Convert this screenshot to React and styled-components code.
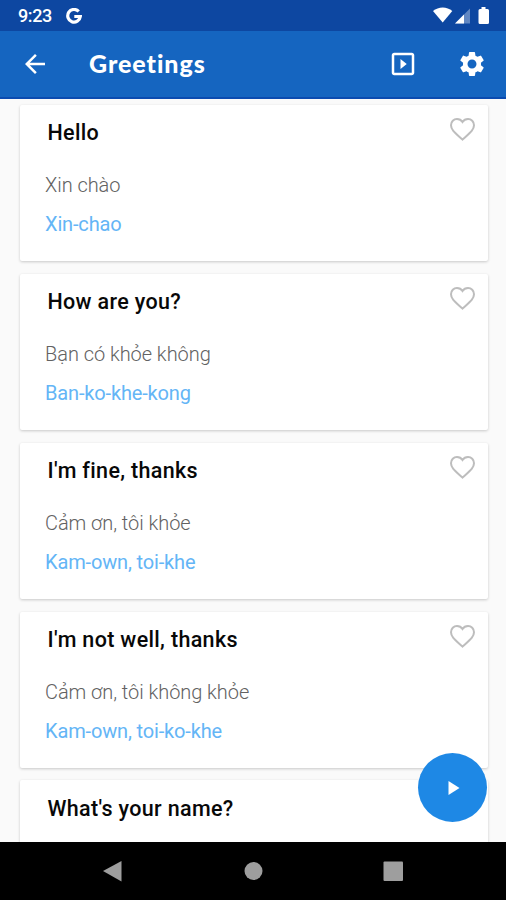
import React from "react"
import styled, { createGlobalStyle } from "styled-components"
import { MdArrowBack, MdOutlineSlideshow, MdSettings } from "react-icons/md"

const GlobalStyle = createGlobalStyle`
    * {
        box-sizing: border-box;
    }

    body {
        margin: 0;
        background: #fafafa;
        font-family: Roboto, "Noto Sans", sans-serif;
    }

    svg {
        display: block;
    }
`

const Screen = styled.div`
    position: relative;
    display: flex;
    flex-direction: column;
    width: 506px;
    height: 900px;
    overflow: hidden;
    background: #fafafa;
`

const StatusBar = styled.div`
    display: flex;
    flex: none;
    align-items: center;
    height: 31px;
    padding: 0 16px 0 18px;
    background: #0d47a1;
    color: #fff;
`

const Clock = styled.span`
    width: 48px;
    font-size: 18px;
    font-weight: 500;
    line-height: 31px;
    letter-spacing: -0.4px;
`

const StatusIcons = styled.div`
    display: flex;
    align-items: center;
    margin-left: auto;
`

const AppBar = styled.header`
    display: flex;
    flex: none;
    align-items: center;
    height: 68px;
    padding: 0 19px 0 20px;
    background: #1565c0;
    border-bottom: 2px solid #0b4bb0;
    color: #fff;
`

const Title = styled.h1`
    flex: 1;
    margin: -2px 0 0 39px;
    font-family: Lato, sans-serif;
    font-size: 25px;
    font-weight: 900;
    line-height: 30px;
    letter-spacing: 0.95px;
`

const Actions = styled.div`
    display: flex;
    gap: 39px;
`

const List = styled.main`
    display: flex;
    flex: 1;
    flex-direction: column;
    gap: 12.85px;
    min-height: 0;
    padding: 6px 18.5px 0 20px;
    overflow: hidden;
`

const Card = styled.article`
    display: flex;
    flex: none;
    justify-content: space-between;
    height: 156px;
    padding: 0 12.5px 0 25px;
    background: #fff;
    border-radius: 2px;
    box-shadow: 0 1px 3px rgba(0, 0, 0, 0.2);
`

const Heart = styled.svg`
    width: 25px;
    height: 23px;
    margin-top: 13px;
    fill: none;
    stroke: #bdbdbd;
    stroke-width: 2;
`

const Phrase = styled.h2`
    margin: 16.4px 0 0 2.5px;
    color: #080808;
    font-size: 21.5px;
    font-weight: 500;
    line-height: 24px;
    letter-spacing: 0.33px;
`

const Line = styled.p`
    margin: ${props => props.$top}px 0 0;
    color: ${props => props.$color};
    font-size: 20px;
    font-weight: ${props => props.$weight};
    line-height: 24px;
    letter-spacing: ${props => props.$spacing}px;
`

const PlayButton = styled.button`
    position: absolute;
    top: 753px;
    left: 418px;
    display: flex;
    align-items: center;
    justify-content: center;
    width: 69px;
    height: 69px;
    padding: 0 0 0 3px;
    border: 0;
    border-radius: 50%;
    background: #1e88e5;
`

const NavBar = styled.nav`
    display: flex;
    flex: none;
    align-items: center;
    justify-content: space-between;
    height: 58px;
    padding: 0 103px 0 102px;
    background: #000;
`

const phrases = [
    { english: "Hello", local: "Xin chào", sound: "Xin-chao" },
    { english: "How are you?", local: "Bạn có khỏe không", sound: "Ban-ko-khe-kong" },
    { english: "I'm fine, thanks", local: "Cảm ơn, tôi khỏe", sound: "Kam-own, toi-khe" },
    { english: "I'm not well, thanks", local: "Cảm ơn, tôi không khỏe", sound: "Kam-own, toi-ko-khe" },
    { english: "What's your name?" },
]

function PhraseCard({ english, local, sound }) {
    return (
        <Card>
            <div>
                <Phrase>{english}</Phrase>
                {local && <Line $top={27.6} $color="#626262" $weight={300} $spacing={-0.05}>{local}</Line>}
                {sound && <Line $top={15} $color="#64b5f6" $weight={400} $spacing={-0.15}>{sound}</Line>}
            </div>
            <Heart viewBox="0 0 25 23">
                <path d="M12.500 21.600C5.500 15.300 1 12.200 1 7.300C1 3.600 3.700 1 7 1C9.200 1 11.300 2.100 12.500 4C13.700 2.100 15.800 1 18 1C21.300 1 24 3.600 24 7.300C24 12.200 19.500 15.300 12.500 21.600Z" />
            </Heart>
        </Card>
    )
}

export default function App() {
    return (
        <Screen>
            <GlobalStyle />
            <StatusBar>
                <Clock>9:23</Clock>
                <svg width="16" height="16" viewBox="0 0 16 16">
                    <path d="M12.700 3.500A6.300 6.300 0 1 0 14.300 8.500H8.300" fill="none" stroke="#fff" strokeWidth="3.2" />
                </svg>
                <StatusIcons>
                    <svg width="57" height="18" viewBox="0 0 57 18" fill="#fff">
                        <path d="M0 4C5.500-.7 14-.7 19.300 4L9.700 15.500z" />
                        <path d="M22 16.500L37 1.500V16.500z" opacity=".35" />
                        <path d="M22 16.500L31 7.500V16.500z" />
                        <path d="M48.500 0h4v2h2q1.500 0 1.500 1.500v12q0 1.500-1.500 1.500h-7.500q-1.500 0-1.500-1.500v-12Q45.500 2 47 2h1.500z" />
                    </svg>
                </StatusIcons>
            </StatusBar>
            <AppBar>
                <MdArrowBack size={30} />
                <Title>Greetings</Title>
                <Actions>
                    <MdOutlineSlideshow size={30} />
                    <MdSettings size={30} />
                </Actions>
            </AppBar>
            <List>
                {phrases.map(phrase => (
                    <PhraseCard key={phrase.english} {...phrase} />
                ))}
            </List>
            <NavBar>
                <svg width="20" height="22" viewBox="0 0 20 22" fill="#9e9e9e">
                    <path d="M19.500 1V21.500L1 11z" />
                </svg>
                <svg width="20" height="20" viewBox="0 0 20 20" fill="#9e9e9e">
                    <circle cx="10.500" cy="10" r="9" />
                </svg>
                <svg width="20" height="20" viewBox="0 0 20 20" fill="#9e9e9e">
                    <rect x=".5" y=".5" width="19.500" height="19.500" rx="1" />
                </svg>
            </NavBar>
            <PlayButton aria-label="Play">
                <svg width="12" height="14" viewBox="0 0 12 14" fill="#fff">
                    <path d="M.5 0v14L11.500 7z" />
                </svg>
            </PlayButton>
        </Screen>
    )
}
